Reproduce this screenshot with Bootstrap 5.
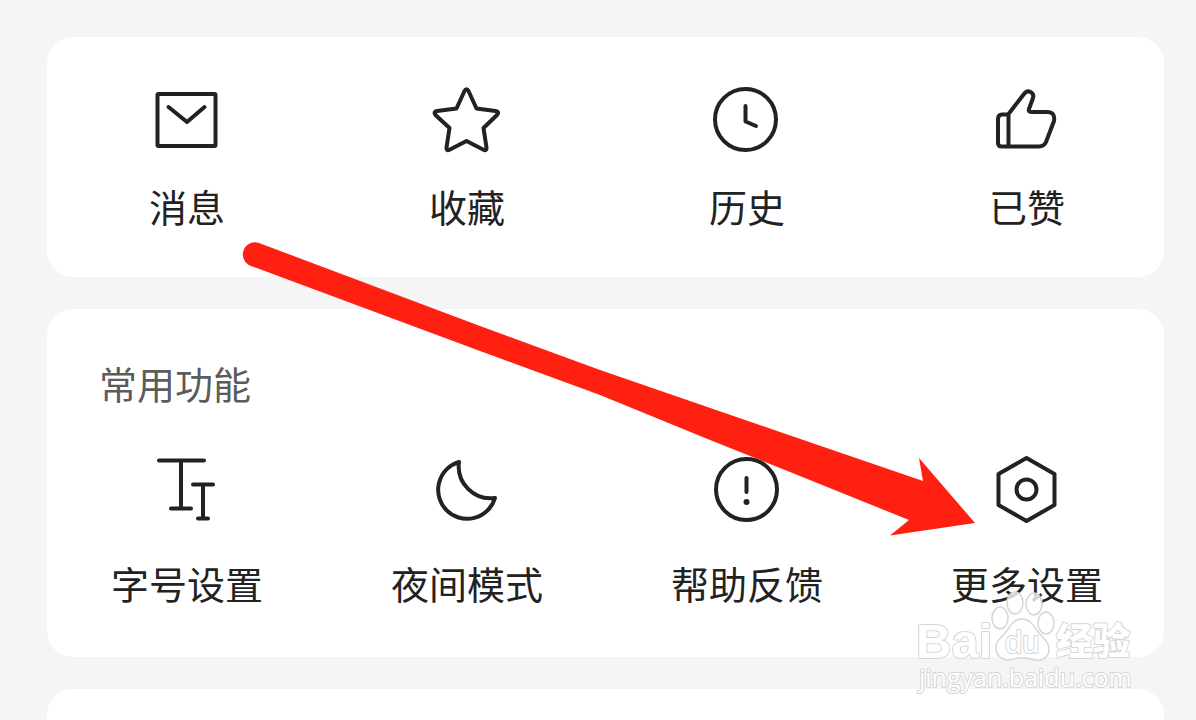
<!DOCTYPE html>
<html lang="zh-CN">
<head>
<meta charset="utf-8">
<meta name="viewport" content="width=device-width, initial-scale=1">
<title>常用功能</title>
<link href="https://cdn.jsdelivr.net/npm/bootstrap@5.3.0/dist/css/bootstrap.min.css" rel="stylesheet">
<style>
  body { background: #f5f5f5; color: #222; font-family: "Noto Sans CJK SC", sans-serif; }
  .page { padding: 37px 32px 0 47px; gap: 32px; height: 100vh; }
  .panel { border-radius: 26px; }
  .panel-top { padding: 47px 0; }
  .panel-tools { padding: 50px 0; }
  .panel-next { min-height: 240px; }
  .tiles { margin-right: -3px; }
  .tile { font-size: 38px; line-height: 48px; gap: 26px; color: inherit; }
  .panel-tools .tile { gap: 33px; }
  .tile svg { width: 72px; height: 72px; fill: none; stroke: #222; stroke-width: 4; stroke-linecap: round; stroke-linejoin: round; }
  .tools-title { font-size: 38px; line-height: 48px; color: #5c5c5c; padding-left: 52px; margin-bottom: 47px; }
  .overlay { pointer-events: none; height: auto; }
  .mark-text { fill: #fff; stroke: #d6d6d6; stroke-width: 2; paint-order: stroke; stroke-linejoin: round; }
</style>
</head>
<body>
<main class="page position-relative overflow-hidden d-flex flex-column">
  <section class="panel panel-top bg-white flex-shrink-0">
    <div class="tiles row g-0">
      <div class="col-3"><a href="#" class="tile d-flex flex-column align-items-center text-decoration-none">
        <svg viewBox="0 0 72 72" aria-hidden="true"><rect x="6.500" y="10" width="58" height="52" rx="1"/><path d="M17.500 23L36 38L53.500 23"/></svg>消息</a></div>
      <div class="col-3"><a href="#" class="tile d-flex flex-column align-items-center text-decoration-none">
        <svg viewBox="0 0 72 72" aria-hidden="true"><path d="M33.500 7Q35.500 3.500 37.500 7L45.500 24.500L64.500 27Q69 28 66 31L52.500 44L55.500 63.500Q56 67.500 52 65.500L35.500 57L19 65.500Q15 67.500 15.500 63.500L18.500 44L4.500 31Q2 28 6 27L25.500 24.500Z"/></svg>收藏</a></div>
      <div class="col-3"><a href="#" class="tile d-flex flex-column align-items-center text-decoration-none">
        <svg viewBox="0 0 72 72" aria-hidden="true"><circle cx="34.500" cy="35.500" r="30.500"/><path d="M34.500 22v15.500L45 42"/></svg>历史</a></div>
      <div class="col-3"><a href="#" class="tile d-flex flex-column align-items-center text-decoration-none">
        <svg viewBox="0 0 72 72" aria-hidden="true"><path d="M17.500 30L33 10C37 4.500 43.500 9 42 14L38 25Q37 28 41 28H56Q64.500 28 63 37L55 58Q53 62.500 48 62.500H11Q7 62.500 7 59V35Q7 30.500 11 30.500H17.500V62.500"/></svg>已赞</a></div>
    </div>
  </section>

  <section class="panel panel-tools bg-white flex-shrink-0">
    <h1 class="tools-title fw-normal">常用功能</h1>
    <div class="tiles row g-0">
      <div class="col-3"><a href="#" class="tile d-flex flex-column align-items-center text-decoration-none">
        <svg viewBox="0 0 72 72" aria-hidden="true"><path d="M8 6.500H53M30 6.500V54.500M20 54.500H40M42 30.500H62M52 30.500V64.500M47 64.500H57"/></svg>字号设置</a></div>
      <div class="col-3"><a href="#" class="tile d-flex flex-column align-items-center text-decoration-none">
        <svg viewBox="0 0 72 72" aria-hidden="true"><path d="M28 8A29 29 0 1 0 64 44A32 32 0 0 1 28 8Z"/></svg>夜间模式</a></div>
      <div class="col-3"><a href="#" class="tile d-flex flex-column align-items-center text-decoration-none">
        <svg viewBox="0 0 72 72" aria-hidden="true"><circle cx="35.500" cy="35.500" r="30.500"/><path d="M35.500 24V38"/><circle cx="35.500" cy="48" r="3" fill="#222" stroke="none"/></svg>帮助反馈</a></div>
      <div class="col-3"><a href="#" class="tile d-flex flex-column align-items-center text-decoration-none">
        <svg viewBox="0 0 72 72" aria-hidden="true"><path d="M35.500 4L63.500 20V51L35.500 67L7.500 51V20Z"/><circle cx="35.500" cy="35.500" r="10"/></svg>更多设置</a></div>
    </div>
  </section>

  <section class="panel panel-next bg-white flex-shrink-0"></section>

  <svg class="overlay position-absolute top-0 start-0 w-100" viewBox="0 0 1196 720" aria-hidden="true">
    <path fill="#ff2011" d="M259 243L480 326L600 370L780 432L923 481L919 458L975 523L890 535.500L909 520L780 468L710 440L600 395L480 351L251 266A12 12 0 0 1 259 243Z"/>
    <g fill="#fff" stroke="#d6d6d6" stroke-width="1.500" fill-opacity=".8">
      <ellipse cx="1000" cy="618" rx="8" ry="11"/>
      <ellipse cx="1015" cy="603" rx="8" ry="11"/>
      <ellipse cx="1034" cy="604" rx="8" ry="11"/>
      <ellipse cx="1046" cy="623" rx="8" ry="11"/>
      <path d="M1022 619C1013 619 1010 627 1005 633C999 640 995 642 996 650C998 660 1008 661 1014 659Q1022 657 1031 659C1040 662 1049 659 1049 649C1049 642 1044 639 1039 633C1034 627 1031 619 1022 619Z"/>
    </g>
    <g class="mark-text">
      <text x="916" y="658" font-family="Liberation Sans, sans-serif" font-weight="700" font-size="49">Bai</text>
      <text x="1005" y="653" font-family="Liberation Sans, sans-serif" font-weight="400" font-size="31">du</text>
      <text x="1056" y="655" font-family="Noto Sans CJK SC, sans-serif" font-weight="900" font-size="37">经验</text>
      <text x="919" y="687" font-family="Open Sans, sans-serif" font-size="25">jingyan.baidu.com</text>
    </g>
  </svg>
</main>
<script src="https://cdn.jsdelivr.net/npm/bootstrap@5.3.0/dist/js/bootstrap.bundle.min.js"></script>
</body>
</html>
